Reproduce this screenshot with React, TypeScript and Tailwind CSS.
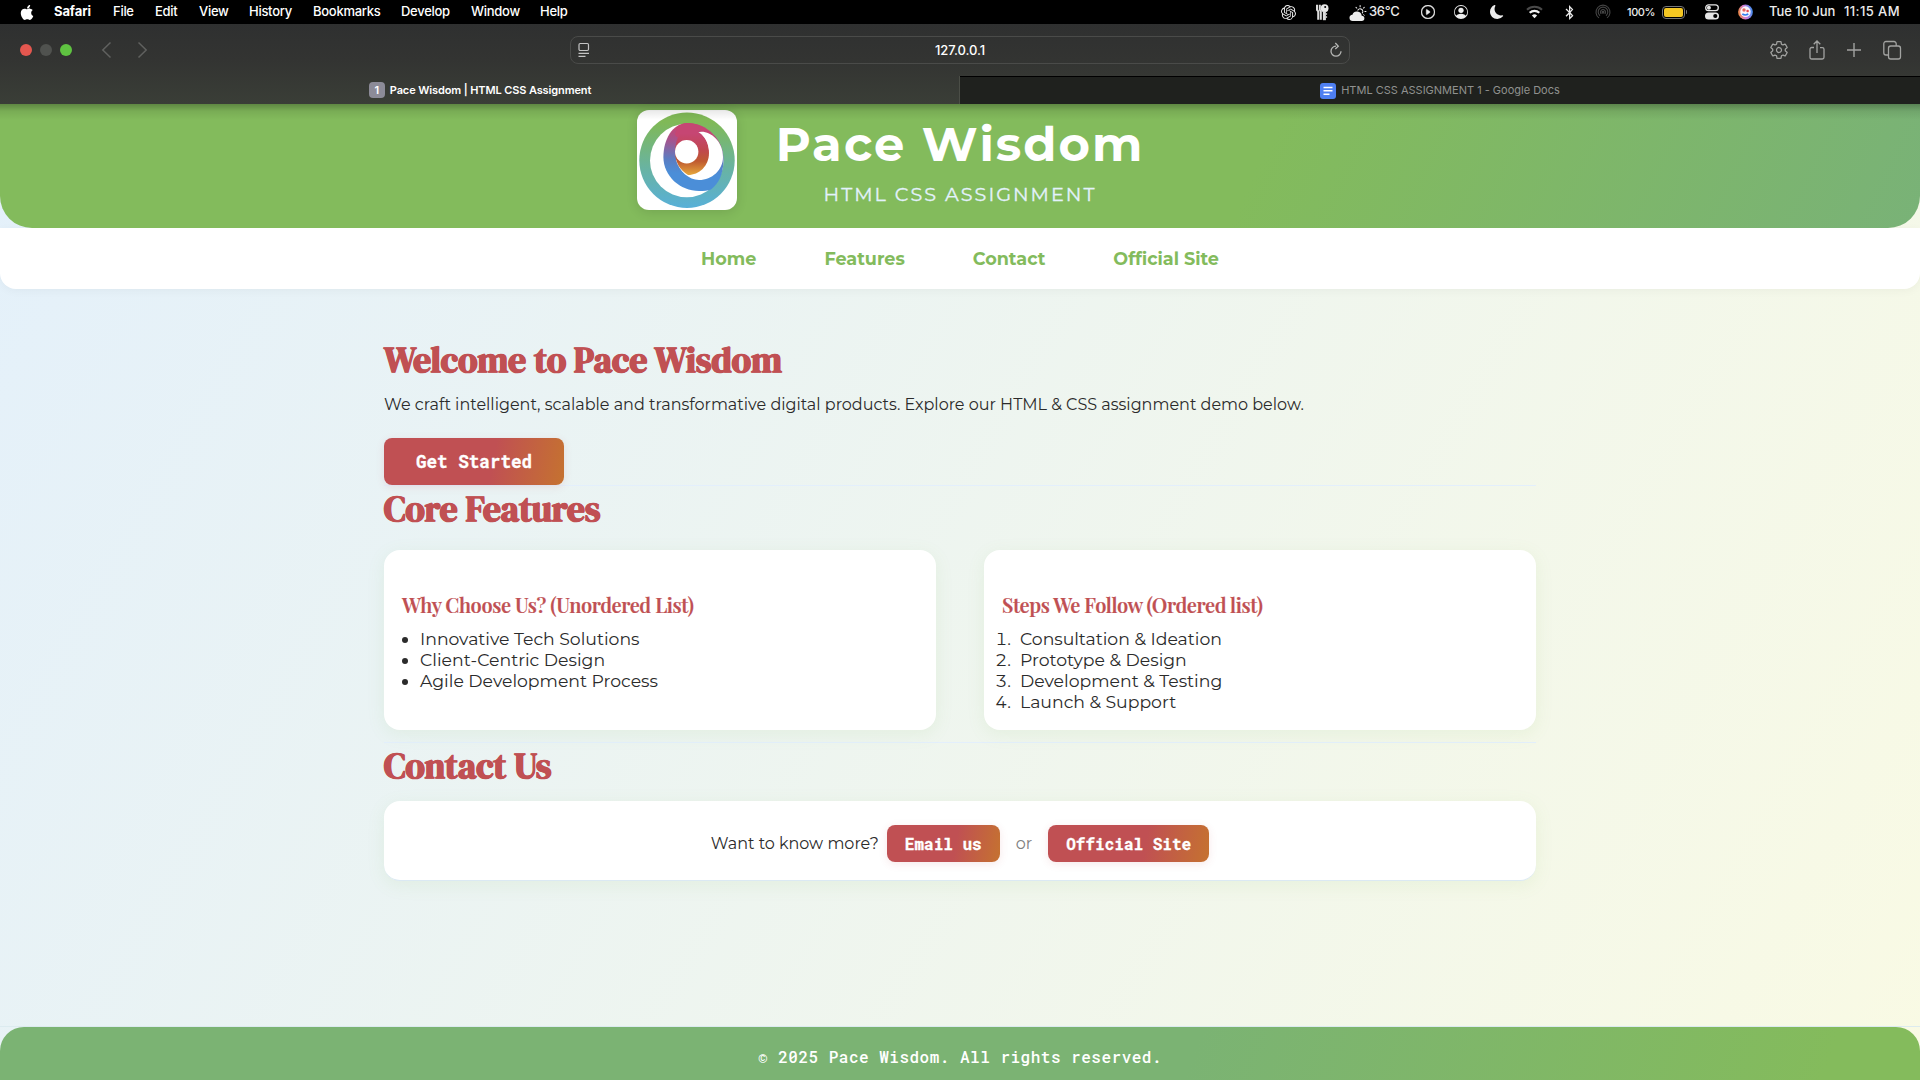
import React from "react";
import { FaApple, FaBluetoothB } from "react-icons/fa";
import { SiOpenai } from "react-icons/si";
import { BsCloudSunFill, BsPlayCircle, BsPersonCircle, BsMoonFill } from "react-icons/bs";
import { IoSettingsOutline } from "react-icons/io5";

const sans = "font-['Inter','Liberation_Sans',sans-serif]";
const body = "font-['Montserrat','Inter',sans-serif]";
const display = "font-['DM_Serif_Display','Liberation_Serif',serif]";
const playfair = "font-['Playfair_Display','Liberation_Serif',serif]";
const mono = "font-['Roboto_Mono','DejaVu_Sans_Mono',monospace]";

const menus: [string, string][] = [
  ["File", "w-[42px]"],
  ["Edit", "w-[44px]"],
  ["View", "w-[50px]"],
  ["History", "w-[64px]"],
  ["Bookmarks", "w-[88px]"],
  ["Develop", "w-[70px]"],
  ["Window", "w-[69px]"],
  ["Help", "w-[40px]"],
];

function KeysIcon() {
  return (
    <svg width="14" height="17" viewBox="0 0 14 17" fill="none" stroke="#dcdcdc">
      <path d="M2 .800v5l1.200 1.500v8.500M4.800 .800v5l1 1.500v8.500" strokeWidth="2" />
      <circle cx="9.600" cy="4.200" r="3.900" fill="#e8e8e8" stroke="none" />
      <path d="M9.400 7v9.200" strokeWidth="3" />
      <path d="M10.900 10h1.200M10.900 13h1.200" strokeWidth="1.400" />
      <circle cx="10.200" cy="3" r="1" fill="#000" stroke="none" />
    </svg>
  );
}

function WifiIcon() {
  return (
    <svg width="17" height="14" viewBox="0 0 17 14" fill="none" strokeLinecap="butt">
      <path d="M1 4.700a11 11 0 0 1 15 0" stroke="#4a4a4a" strokeWidth="2.100" />
      <path d="M3.700 7.800a7 7 0 0 1 9.600 0" stroke="#f2f2f2" strokeWidth="2.100" />
      <path d="M8.500 13.300 5.900 10.600a3.700 3.700 0 0 1 5.200 0Z" fill="#f2f2f2" />
    </svg>
  );
}

function AirdropIcon() {
  return (
    <svg width="16" height="16" viewBox="0 0 16 16" fill="none" stroke="#454545" strokeWidth="1.100">
      <path d="M4 13.900a7 7 0 1 1 8 0" />
      <path d="M5 11.700a4.800 4.800 0 1 1 6 0" />
      <path d="M6.300 9.900a2.500 2.500 0 1 1 3.400 0" />
      <circle cx="8" cy="8.300" r="0.900" fill="#454545" />
    </svg>
  );
}

function ControlIcon() {
  return (
    <svg width="14" height="16" viewBox="0 0 14 16">
      <rect x="0.700" y="0.900" width="12.600" height="5.800" rx="2.900" fill="none" stroke="#e6e6e6" strokeWidth="1.300" />
      <circle cx="3.900" cy="3.800" r="2" fill="#e6e6e6" />
      <rect x="0" y="8.500" width="14" height="7" rx="3.500" fill="#e6e6e6" />
      <circle cx="10.300" cy="12" r="2.100" fill="#000" />
    </svg>
  );
}

function AssistantIcon() {
  return (
    <svg width="15" height="16" viewBox="0 0 15 16">
      <defs>
        <linearGradient id="assist" x1="0" y1="0.600" x2="1" y2="0.400">
          <stop offset="0" stopColor="#f08a3c" />
          <stop offset="0.450" stopColor="#d07ad8" />
          <stop offset="1" stopColor="#3a8df0" />
        </linearGradient>
      </defs>
      <ellipse cx="7.500" cy="8" rx="7.400" ry="7.600" fill="url(#assist)" />
      <ellipse cx="7.500" cy="7.700" rx="5.200" ry="5.400" fill="#fff" opacity="0.920" />
      <circle cx="6" cy="6" r="1.700" fill="#e5675d" />
      <circle cx="9.600" cy="7" r="1.300" fill="#e5484d" />
      <path d="M4.300 10c2 1.200 4 1.200 6 0" stroke="#2f7df0" strokeWidth="1.500" fill="none" />
    </svg>
  );
}

function MenuBar() {
  return (
    <div className={`flex h-6 items-center bg-black text-[13px] font-medium tracking-[-0.28px] text-white ${sans}`}>
      <div className="flex w-[54px] pl-[19px]">
        <FaApple className="h-[17px] w-[16px]" />
      </div>
      <div className="w-[59px] font-bold tracking-[-0.1px]">Safari</div>
      {menus.map(([m, w]) => (
        <div key={m} className={`whitespace-nowrap ${w}`}>{m}</div>
      ))}
      <div className="ml-auto flex items-center text-[#ececec]">
        <div className="flex w-[34px] justify-center"><SiOpenai className="size-[15px]" /></div>
        <div className="flex w-[34px] justify-center"><KeysIcon /></div>
        <div className="ml-[10px] flex w-[52px] items-center">
          <BsCloudSunFill className="mr-[2px] h-[17px] w-[18px] shrink-0" />
          <span className="whitespace-nowrap">36°C</span>
        </div>
        <div className="ml-[11px] flex w-[32px] justify-center"><BsPlayCircle className="size-[14px] stroke-[0.5]" /></div>
        <div className="flex w-[34px] justify-center"><BsPersonCircle className="size-[14px]" /></div>
        <div className="flex w-[38px] justify-center"><BsMoonFill className="size-[14px]" /></div>
        <div className="flex w-[36px] justify-center"><WifiIcon /></div>
        <div className="flex w-[35px] justify-center"><FaBluetoothB className="h-[15px] w-[11px]" /></div>
        <div className="flex w-[31px] justify-center"><AirdropIcon /></div>
        <span className="ml-[9px] w-[35px] text-[11px] tracking-[-0.4px]">100%</span>
        <div className="flex w-[25px] items-center">
          <div className="flex h-[13px] w-[23px] shrink-0 rounded-[4px] border border-[#777] p-px">
            <div className="flex-1 rounded-[2px] bg-[#f5c722]" />
          </div>
          <div className="ml-px h-1 w-px rounded-r bg-[#777]" />
        </div>
        <div className="ml-[17px] flex w-[16px] justify-center"><ControlIcon /></div>
        <div className="ml-[17px] flex w-[16px] justify-center"><AssistantIcon /></div>
        <span className="ml-[16px] w-[75px] whitespace-nowrap tracking-[-0.05px]">Tue 10 Jun</span>
        <span className="w-[76px] whitespace-nowrap tracking-[0.400px]">11:15 AM</span>
      </div>
    </div>
  );
}

function Toolbar() {
  return (
    <div className={`flex h-[52px] items-center text-[#a2a3a1] ${sans}`}>
      <div className="flex w-[570px] items-center pl-5">
        <span className="size-3 rounded-full bg-[#e4574f]" />
        <span className="ml-2 size-3 rounded-full bg-[#50524f]" />
        <span className="ml-2 size-3 rounded-full bg-[#5fc341]" />
        <svg className="ml-[29px]" width="46" height="18" viewBox="0 0 46 18" fill="none" stroke="#60615f" strokeWidth="1.500">
          <path d="M9.500 1.500 1.800 9l7.700 7.500M37.500 1.500 45.200 9l-7.700 7.500" />
        </svg>
      </div>
      <div className="flex h-7 w-[780px] items-center rounded-lg border border-[#4a4b49] px-[7px]">
        <svg width="12" height="16" viewBox="0 0 12 16" fill="none" stroke="#c4c4c4" strokeWidth="1.200">
          <rect x="1" y="1.500" width="9.500" height="7" rx="1.200" />
          <path d="M.5 11.300h10.500M.5 14.400h7" />
        </svg>
        <span className="flex-1 pt-px text-center text-[13px] font-medium tracking-[-0.08px] text-white">127.0.0.1</span>
        <svg width="12" height="16" viewBox="0 0 12 16" fill="none" stroke="#b6b7b5" strokeWidth="1.300">
          <path d="M6 4.200A5 5 0 1 0 11 9.200M5.300 1 8.300 4.200 5.300 7" />
        </svg>
      </div>
      <div className="flex flex-1 items-center justify-end pb-px pr-[18px]">
        <IoSettingsOutline className="size-[20px]" />
        <svg className="ml-[19px]" width="18" height="20" viewBox="0 0 18 20" fill="none" stroke="currentColor" strokeWidth="1.300">
          <path d="M6 7.500H3.700A1.700 1.700 0 0 0 2 9.200v8A1.700 1.700 0 0 0 3.700 19h10.600a1.700 1.700 0 0 0 1.700-1.700v-8a1.700 1.700 0 0 0-1.700-1.700H12M9 13V1.200M5.700 4.300 9 1l3.300 3.300" />
        </svg>
        <svg className="ml-[21px]" width="14" height="14" viewBox="0 0 14 14" fill="none" stroke="currentColor" strokeWidth="1.400">
          <path d="M7 0v14M0 7h14" />
        </svg>
        <svg className="ml-[21px]" width="20" height="20" viewBox="0 0 20 20" fill="none" stroke="currentColor" strokeWidth="1.300">
          <rect x="6.500" y="6" width="12" height="13" rx="2.200" />
          <path d="M6.500 15H4a2.200 2.200 0 0 1-2.200-2.200V3.700A2.200 2.200 0 0 1 4 1.500h8a2.200 2.200 0 0 1 2.200 2.200V6" />
        </svg>
      </div>
    </div>
  );
}

function TabStrip() {
  return (
    <div className={`flex h-7 text-[11px] ${sans}`}>
      <div className="flex w-[960px] items-center justify-center gap-[5px] border-r border-[#4b4e47] pl-px text-white">
        <span className="flex size-4 items-center justify-center rounded-[4px] bg-[#8c8b98] font-semibold">1</span>
        <span className="font-semibold tracking-[-0.120px]">Pace Wisdom | HTML CSS Assignment</span>
      </div>
      <div className="flex flex-1 items-center justify-center gap-[5px] border-t border-black bg-[#1f211e] text-[#90918f]">
        <svg width="16" height="16" viewBox="0 0 16 16">
          <rect width="16" height="16" rx="3" fill="#4e7ff2" />
          <path d="M3.500 4.500h9M3.500 7.800h9M3.500 11.200h6" stroke="#fff" strokeWidth="1.500" />
        </svg>
        <span>HTML CSS ASSIGNMENT 1 - Google Docs</span>
      </div>
    </div>
  );
}

function Logo() {
  return (
    <svg width="100" height="100" viewBox="0 0 100 100" className="rounded-xl bg-white shadow-[0_2px_12px_rgba(0,0,0,0.12)]">
      <defs>
        <linearGradient id="ring" x1="0" y1="0" x2="0" y2="1">
          <stop offset="0.100" stopColor="#80b957" />
          <stop offset="0.600" stopColor="#68b3a4" />
          <stop offset="1" stopColor="#58b0d8" />
        </linearGradient>
        <linearGradient id="swirl" x1="0.500" y1="0" x2="0.450" y2="1">
          <stop offset="0.080" stopColor="#c64673" />
          <stop offset="0.280" stopColor="#a3558f" />
          <stop offset="0.550" stopColor="#5b7dc2" />
          <stop offset="0.750" stopColor="#4b8ed8" />
        </linearGradient>
        <linearGradient id="arc" x1="0" y1="0" x2="0" y2="1">
          <stop offset="0.100" stopColor="#c64673" />
          <stop offset="0.450" stopColor="#c0474f" />
          <stop offset="0.700" stopColor="#bf5a30" />
          <stop offset="1" stopColor="#e6a73c" />
        </linearGradient>
      </defs>
      <circle cx="50" cy="50.300" r="47.700" fill="url(#ring)" />
      <circle cx="49.800" cy="50.500" r="36.800" fill="#fff" />
      <path d="M50 13C35 13.500 26.400 30 26.400 47C26.400 66 43 81 62 81C67 81 71 80.500 74 79.500C82 73 86 65 86.600 50C86.600 29 70 13 50 13Z" fill="url(#swirl)" />
      <path d="M50 13C66 13 80 25 85 40C80 29 72 21.500 61 21C58 30 40 32 38 24C40 18 44 13.500 50 13Z" fill="#c64673" />
      <path d="M60.500 22.500C70 19 86 29 86 47C86 60 75 70 62 70C52 70 42 61 39 50L60 35Z" fill="#fff" />
      <path d="M50 19C64 19 72 30 72 43C72 56 62 65 51 65C43 60 38 52 38 42C38 33 41 22 50 19Z" fill="url(#arc)" />
      <path d="M60.500 21.500C67 25 71 31 72 40L74 30Z" fill="#fff" />
      <circle cx="49.700" cy="41.700" r="11.700" fill="#fff" />
    </svg>
  );
}

function Header() {
  return (
    <header className="flex h-[124px] items-start justify-center rounded-b-[32px] bg-[linear-gradient(115deg,#83bb5c_0%,#83bb5c_65%,#79b277_100%)] pt-[6px]">
      <Logo />
      <div className="ml-[38px] mr-[138px] flex w-[370px] flex-col items-center pt-[5px] text-white">
        <h1 className="whitespace-nowrap text-[48px] font-bold leading-[59px] tracking-[2px]">Pace Wisdom</h1>
        <p className="mt-[9px] whitespace-nowrap text-[19.2px] leading-[23px] tracking-[2px] text-[#e3f2fd] [-webkit-text-stroke:0.3px_#e3f2fd]">HTML CSS ASSIGNMENT</p>
      </div>
    </header>
  );
}

function Feature({ title, children }: { title: string; children: React.ReactNode }) {
  return (
    <div className="h-[180px] flex-1 rounded-2xl bg-white px-[18px] pt-[42px] shadow-[0_4px_18px_rgba(131,187,92,0.1)]">
      <h3 className={`text-[20px] font-semibold leading-[26px] tracking-[-0.400px] text-[#c05053] [-webkit-text-stroke:0.2px_#c05053] ${playfair}`}>{title}</h3>
      {children}
    </div>
  );
}

const btn = `rounded-lg bg-[linear-gradient(100deg,#c05053_0%,#c05053_60%,#c57230_100%)] pt-0.5 font-bold text-white shadow-[0_2px_8px_rgba(192,80,83,0.13)] [-webkit-text-stroke:0.3px_#fff] ${mono}`;
const heading = `text-[35.2px] font-bold leading-[48px] tracking-[0.160px] text-[#c05053] [-webkit-text-stroke:0.6px_#c05053] ${display}`;
const steps = ["Consultation & Ideation", "Prototype & Design", "Development & Testing", "Launch & Support"];

export default function App() {
  return (
    <div className={`flex h-[1080px] w-[1920px] flex-col overflow-hidden bg-[linear-gradient(120deg,#e3f0fb_0%,#f9fae4_100%)] text-[#2b2b2b] ${body}`}>
      <MenuBar />
      <div className="bg-[linear-gradient(#2f3030_0%,#333432_45%,#3a3e37_100%)]">
        <Toolbar />
        <TabStrip />
      </div>
      <div className="relative">
        <Header />
        <div className="absolute inset-x-0 top-0 h-4 bg-[linear-gradient(rgba(0,0,0,0.280),rgba(0,0,0,0.080)_45%,transparent)]" />
      </div>
      <nav className="flex h-[61px] items-center justify-center gap-[68px] rounded-b-2xl bg-white pt-0.5 text-[17.6px] font-bold text-[#83bb5c] shadow-[0_2px_10px_rgba(0,0,0,0.04)]">
        <a>Home</a>
        <a>Features</a>
        <a>Contact</a>
        <a>Official Site</a>
      </nav>
      <main className="mx-auto flex w-[1152px] flex-1 flex-col">
        <section className="h-[197px] border-b border-[#e3effc] pt-[47px]">
          <h2 className={heading}>Welcome to Pace Wisdom</h2>
          <p className="mt-[11px] text-[16px] leading-5">We craft intelligent, scalable and transformative digital products. Explore our HTML &amp; CSS assignment demo below.</p>
          <button className={`mt-[23px] h-[47px] w-[180px] text-[17.6px] ${btn}`}>Get Started</button>
        </section>
        <section className="h-[257px] border-b border-[#e3effc]">
          <h2 className={`-mt-px ${heading}`}>Core Features</h2>
          <div className="mt-[17px] flex gap-12">
            <Feature title="Why Choose Us? (Unordered List)">
              <ul className="mt-[10px] list-disc pl-[18px] text-[17.280px] leading-[21px]">
                <li>Innovative Tech Solutions</li>
                <li>Client-Centric Design</li>
                <li>Agile Development Process</li>
              </ul>
            </Feature>
            <Feature title="Steps We Follow (Ordered list)">
              <ol className="-ml-[9px] mt-[10px] text-[17.280px] leading-[21px]">
                {steps.map((s, i) => (
                  <li key={s} className="flex gap-[9px]">
                    <span className="w-[18px] text-right tabular-nums">{i + 1}.</span>
                    <span>{s}</span>
                  </li>
                ))}
              </ol>
            </Feature>
          </div>
        </section>
        <section>
          <h2 className={`-mt-px ${heading}`}>Contact Us</h2>
          <div className="mt-[11px] flex h-[80px] items-center justify-center rounded-2xl border-b border-[#dbe9f3] bg-white pt-[5px] shadow-[0_4px_18px_rgba(131,187,92,0.1)]">
            <span className="mt-0.5">Want to know more?</span>
            <button className={`ml-2 h-[37px] w-[113px] text-[16px] ${btn}`}>Email us</button>
            <span className="mx-4 mt-0.5 text-[#808080]">or</span>
            <button className={`h-[37px] w-[161px] text-[16px] ${btn}`}>Official Site</button>
          </div>
        </section>
      </main>
      <div className="h-px bg-[#dcebef]" />
      <footer className={`flex h-[53px] items-center justify-center rounded-t-[24px] bg-[linear-gradient(110deg,#7bb373_0%,#7bb373_62%,#84bb5c_95%)] pt-[7px] text-[16px] font-medium tracking-[0.5px] text-white ${mono}`}>
        © 2025 Pace Wisdom. All rights reserved.
      </footer>
    </div>
  );
}
